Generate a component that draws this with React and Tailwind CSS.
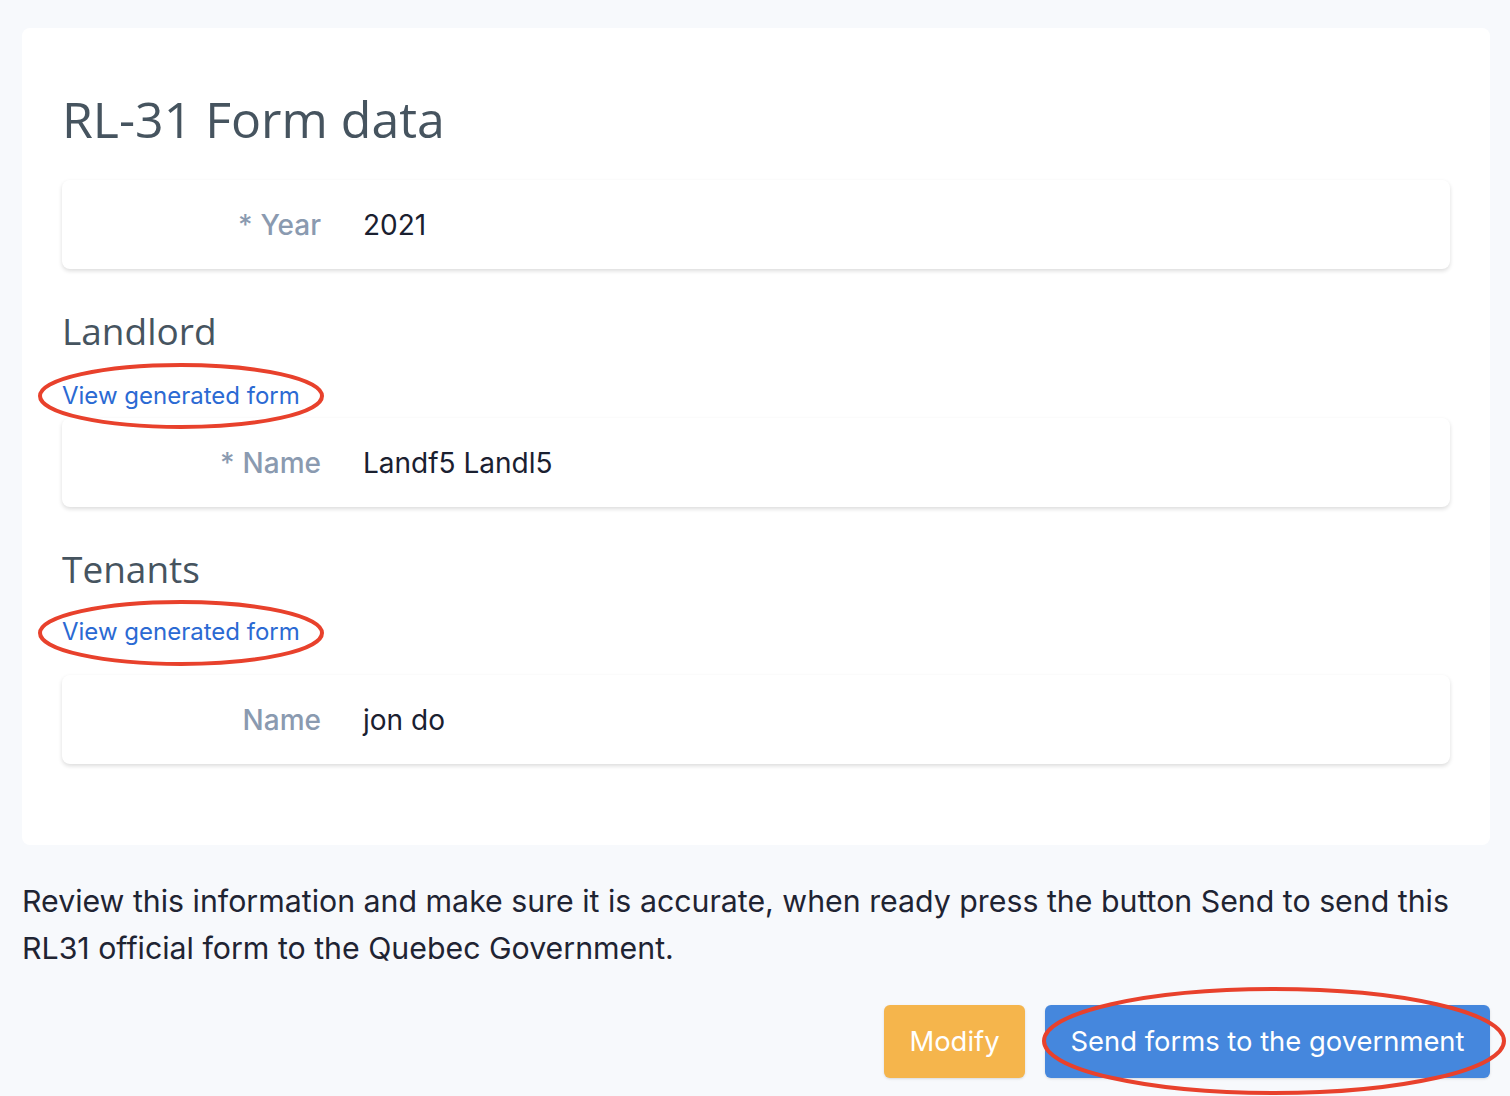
import React from 'react';

const heading = { fontFamily: '"Open Sans", Lato, sans-serif' };
const body = { fontFamily: 'Inter, "Noto Sans", sans-serif' };

const FieldCard = ({ label, required, value }) => (
  <div className="flex h-[89px] items-center rounded-lg bg-white shadow-[0_2px_4px_rgba(0,0,0,0.14)]">
    <div className="w-[259px] text-right text-[28px] font-medium text-[#8a9ab0]">
      {required && <span className="mr-2">*</span>}
      {label}
    </div>
    <div className="ml-[42px] text-[28px] text-[#1a2030]">{value}</div>
  </div>
);

const Section = ({ title, children, linkTop }) => (
  <div>
    <h2 className="mt-[38px] text-[37px] leading-[48px] text-[#46545f]" style={heading}>
      {title}
    </h2>
    <a className={`block text-[24px] leading-[32px] text-[#2b6ad3] ${linkTop}`} href="#">
      View generated form
    </a>
    {children}
  </div>
);

export default function App() {
  return (
    <div className="relative min-h-screen bg-[#f7f9fc] pl-[22px] pr-[20px] pt-[28px]" style={body}>
      <div className="rounded-lg bg-white px-10 pt-[55px] pb-[81px]">
        <h1 className="text-[50px] leading-[72px] text-[#46545f]" style={heading}>
          RL-31 Form data
        </h1>
        <div className="mt-[25px]">
          <FieldCard label="Year" required value="2021" />
        </div>
        <Section title="Landlord" linkTop="mt-[25px]">
          <div className="mt-[6px]">
            <FieldCard label="Name" required value="Landf5 Landl5" />
          </div>
        </Section>
        <Section title="Tenants" linkTop="mt-[23px]">
          <div className="mt-[27px]">
            <FieldCard label="Name" value="jon do" />
          </div>
        </Section>
      </div>

      <p className="mt-[33px] text-[30.3px] leading-[47px] text-[#1f2433]">
        Review this information and make sure it is accurate, when ready press the button Send to send this RL31 official form to the Quebec Government.
      </p>

      <div className="mt-[33px] flex justify-end gap-5">
        <button className="h-[73px] w-[141px] rounded-md bg-[#f5b54c] text-[27.4px] text-white shadow-sm">
          Modify
        </button>
        <button className="h-[73px] w-[445px] rounded-md bg-[#4587dd] text-[27.4px] text-white shadow-sm">
          Send forms to the government
        </button>
      </div>

      <svg className="pointer-events-none absolute left-0 top-0" width="1510" height="1096">
        <g fill="none" stroke="#e8412c" strokeWidth="4">
          <ellipse cx="181" cy="396" rx="141" ry="31" />
          <ellipse cx="181" cy="633" rx="141" ry="31" />
          <ellipse cx="1274" cy="1041" rx="230" ry="52" />
        </g>
      </svg>
    </div>
  );
}
